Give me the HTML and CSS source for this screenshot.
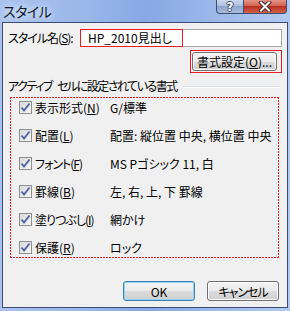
FILE: index.html
```html
<!DOCTYPE html>
<html lang="ja">
<head>
    <meta charset="UTF-8">
    <title>スタイル</title>
    <link rel="stylesheet" href="styles.css">
</head>
<body>
    <div class="window">
        <div class="titlebar">
            <span class="title">スタイル</span>
            <div class="caption-buttons">
                <span class="cap-btn help">?</span>
                <span class="cap-btn close">
                    <svg width="14" height="11" viewBox="0 0 14 11">
                        <path d="M3 1.5 L11 9.5 M11 1.5 L3 9.5" stroke="#4a2a2a" stroke-width="4" stroke-linecap="square"/>
                        <path d="M3 1.5 L11 9.5 M11 1.5 L3 9.5" stroke="#ffffff" stroke-width="2" stroke-linecap="square"/>
                    </svg>
                </span>
            </div>
        </div>

        <div class="client">
            <div class="name-row">
                <span class="name-label kana">スタイル名(<u>S</u>):</span>
                <div class="name-input"><span class="mark">HP_2010見出し</span></div>
            </div>

            <div class="format-row">
                <span class="mark-btn"><button class="btn btn-format">書式設定(<u>O</u>)...</button></span>
            </div>

            <div class="group-head">
                <span class="group-title">アクティブ セルに設定されている書式</span>
                <span class="rule"></span>
            </div>

            <div class="items">
                <div class="item">
                    <span class="check"><svg width="11" height="11" viewBox="0 0 11 11"><path d="M1.5 5.5 L4 8.5 L9.5 1.5" fill="none" stroke="#4b60a0" stroke-width="1.8"/></svg></span>
                    <span class="item-label">表示形式(<u>N</u>)</span>
                    <span class="item-value">G/標準</span>
                </div>
                <div class="item">
                    <span class="check"><svg width="11" height="11" viewBox="0 0 11 11"><path d="M1.5 5.5 L4 8.5 L9.5 1.5" fill="none" stroke="#4b60a0" stroke-width="1.8"/></svg></span>
                    <span class="item-label">配置(<u>L</u>)</span>
                    <span class="item-value">配置: 縦位置 中央, 横位置 中央</span>
                </div>
                <div class="item">
                    <span class="check"><svg width="11" height="11" viewBox="0 0 11 11"><path d="M1.5 5.5 L4 8.5 L9.5 1.5" fill="none" stroke="#4b60a0" stroke-width="1.8"/></svg></span>
                    <span class="item-label kana">フォント(<u>F</u>)</span>
                    <span class="item-value">MS Pゴシック 11, 白</span>
                </div>
                <div class="item">
                    <span class="check"><svg width="11" height="11" viewBox="0 0 11 11"><path d="M1.5 5.5 L4 8.5 L9.5 1.5" fill="none" stroke="#4b60a0" stroke-width="1.8"/></svg></span>
                    <span class="item-label">罫線(<u>B</u>)</span>
                    <span class="item-value">左, 右, 上, 下 罫線</span>
                </div>
                <div class="item">
                    <span class="check"><svg width="11" height="11" viewBox="0 0 11 11"><path d="M1.5 5.5 L4 8.5 L9.5 1.5" fill="none" stroke="#4b60a0" stroke-width="1.8"/></svg></span>
                    <span class="item-label kana">塗りつぶし(<u>I</u>)</span>
                    <span class="item-value">網かけ</span>
                </div>
                <div class="item">
                    <span class="check"><svg width="11" height="11" viewBox="0 0 11 11"><path d="M1.5 5.5 L4 8.5 L9.5 1.5" fill="none" stroke="#4b60a0" stroke-width="1.8"/></svg></span>
                    <span class="item-label">保護(<u>R</u>)</span>
                    <span class="item-value">ロック</span>
                </div>
            </div>

            <div class="actions">
                <button class="btn btn-default">OK</button>
                <button class="btn kana">キャンセル</button>
            </div>
        </div>
    </div>
</body>
</html>
```

FILE: styles.css
```css
body {
    margin: 0;
    font-family: "Noto Sans CJK JP", sans-serif;
    font-size: 12px;
    font-feature-settings: "palt" 1;
    color: #000;
}
u {
    text-underline-offset: 1px;
}
.kana {
    letter-spacing: -1px;
}
.window {
    width: 290px;
    height: 311px;
    display: flex;
    flex-direction: column;
    background: linear-gradient(to right, #a9c2ee, #9ab7ea 30%, #86a8e4 50%, #9db9eb 75%, #b3caf0);
}
.titlebar {
    height: 22px;
    display: flex;
    justify-content: space-between;
    align-items: flex-start;
}
.title {
    padding: 2px 0 0 3px;
    font-size: 14px;
    letter-spacing: -0.5px;
    line-height: 18px;
    color: #101828;
    text-shadow: 0 0 6px #eef3ff, 0 0 10px #e4edfc;
}
.caption-buttons {
    display: flex;
    margin-right: 3px;
}
.cap-btn {
    height: 14px;
    box-sizing: border-box;
    display: flex;
    align-items: center;
    justify-content: center;
    border: 1px solid #3e4d70;
    border-top: none;
}
.help {
    width: 27px;
    border-right: none;
    border-radius: 0 0 0 4px;
    background: linear-gradient(#cdd8ee, #a8badd 50%, #8fa4cd 50%, #a9bce0);
    color: #fff;
    font-family: "DejaVu Sans", sans-serif;
    font-weight: bold;
    font-size: 12px;
    line-height: 12px;
    text-shadow: -1px 0 #3c4a68, 1px 0 #3c4a68, 0 -1px #3c4a68, 0 1px #3c4a68;
}
.close {
    width: 44px;
    border-radius: 0 0 4px 0;
    background: linear-gradient(#e49588, #cf5c4b 50%, #b9301f 50%, #d2614c);
}
.client {
    flex: 1;
    margin: 0 2px 3px;
    border: 1px solid #3b4c75;
    background: #f0f0f0;
    display: flex;
    flex-direction: column;
    padding: 0 5px;
}
.name-row {
    margin-top: 6px;
    display: flex;
    align-items: center;
}
.name-label {
    flex: none;
    width: 72px;
    line-height: 18px;
    white-space: nowrap;
}
.name-input {
    width: 202px;
    height: 18px;
    box-sizing: border-box;
    border: 1px solid #a5a9b0;
    background: #fff;
}
.mark {
    display: block;
    box-sizing: border-box;
    width: 103px;
    height: 18px;
    margin: -1px 0 0 -1px;
    padding-left: 7px;
    border: 1px solid #ec1c24;
    line-height: 16px;
}
.format-row {
    margin-top: 3px;
    display: flex;
    justify-content: flex-end;
}
.mark-btn {
    display: flex;
    padding: 1px 4px 1px 1px;
    border: 1px solid #ec1c24;
}
.btn {
    box-sizing: border-box;
    width: 72px;
    height: 20px;
    padding: 0;
    font-family: inherit;
    font-size: 12px;
    font-feature-settings: "palt" 1;
    color: #000;
    border: 1px solid #707070;
    border-radius: 3px;
    background: linear-gradient(#f3f3f3, #ebebeb 50%, #dcdcdc 50%, #cfcfcf);
    box-shadow: inset 0 0 0 1px #fbfbfb;
}
.btn-format {
    width: 85px;
    height: 19px;
}
.btn-default {
    border-color: #3c7fb1;
    box-shadow: inset 0 0 0 1px #8fd8f7;
}
.group-head {
    margin-top: 6px;
    display: flex;
    align-items: center;
    line-height: 14px;
    white-space: nowrap;
}
.group-title {
    letter-spacing: -1.5px;
    word-spacing: 4px;
}
.rule {
    flex: 1;
    margin: 1px 2px 0 5px;
    border-top: 1px solid #d5dfe5;
    border-bottom: 1px solid #fff;
}
.items {
    margin: 4px 3px 0 2px;
    padding: 3px 0 4px 9px;
    display: grid;
    grid-auto-rows: 14px;
    row-gap: 14px;
    background:
        repeating-linear-gradient(to right, #ec1c24 0 2px, transparent 2px 3px) top / 100% 1px no-repeat,
        repeating-linear-gradient(to right, #ec1c24 0 2px, transparent 2px 3px) bottom / 100% 1px no-repeat,
        repeating-linear-gradient(to bottom, #ec1c24 0 2px, transparent 2px 3px) left / 1px 100% no-repeat,
        repeating-linear-gradient(to bottom, #ec1c24 0 2px, transparent 2px 3px) right / 1px 100% no-repeat;
}
.item {
    display: flex;
    align-items: center;
    white-space: nowrap;
}
.check {
    width: 13px;
    height: 13px;
    box-sizing: border-box;
    border: 1px solid #8e8f8f;
    background: linear-gradient(135deg, #d9d9d9, #f7f7f7);
    display: flex;
    align-items: center;
    justify-content: center;
}
.item-label {
    width: 75px;
    margin-left: 3px;
}
.actions {
    margin: auto 3px 6px 0;
    display: flex;
    justify-content: flex-end;
    gap: 12px;
}
```
